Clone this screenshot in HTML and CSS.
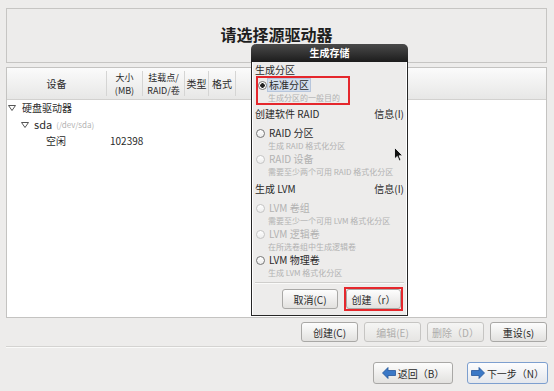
FILE: index.html
```html
<!DOCTYPE html>
<html lang="zh-CN">
<head>
  <meta charset="UTF-8">
  <title>请选择源驱动器</title>
  <link rel="stylesheet" href="styles.css">
</head>
<body>
  <div class="screen">
    <div class="title-box">
      <h1>请选择源驱动器</h1>
    </div>

    <div class="tree">
      <div class="tree-head">
        <div class="col c-dev">设备</div>
        <div class="col c-size two-line">大小<br>(MB)</div>
        <div class="col c-mount two-line">挂载点/<br>RAID/卷</div>
        <div class="col c-type">类型</div>
        <div class="col c-fmt">格式</div>
      </div>
      <div class="tree-body">
        <div class="row lvl0">
          <svg class="expander" width="8" height="6" viewBox="0 0 8 6"><path d="M0.5 0.5 H7.5 L4 5.5 Z" fill="none" stroke="#555" stroke-width="1"/></svg>
          <span>硬盘驱动器</span>
        </div>
        <div class="row lvl1">
          <svg class="expander" width="8" height="6" viewBox="0 0 8 6"><path d="M0.5 0.5 H7.5 L4 5.5 Z" fill="none" stroke="#555" stroke-width="1"/></svg>
          <span class="dev">sda</span>
          <span class="dev-path">(/dev/sda)</span>
        </div>
        <div class="row lvl2">
          <span class="free-name">空闲</span>
          <span class="free-size">102398</span>
        </div>
      </div>
    </div>

    <div class="actions">
      <button class="btn">创建(C)</button>
      <button class="btn" disabled>编辑(E)</button>
      <button class="btn" disabled>删除（D）</button>
      <button class="btn">重设(s)</button>
    </div>

    <div class="sep"></div>

    <div class="nav">
      <button class="btn btn-nav">
        <svg width="14" height="12" viewBox="0 0 14 12"><path d="M0.5 6 L6 0.5 V3.5 H13.5 V8.5 H6 V11.5 Z" fill="#3a78c6" stroke="#24569a" stroke-width="0.8"/></svg>
        <span>返回（B）</span>
      </button>
      <button class="btn btn-nav btn-focus">
        <svg width="14" height="12" viewBox="0 0 14 12"><path d="M13.5 6 L8 0.5 V3.5 H0.5 V8.5 H8 V11.5 Z" fill="#3a78c6" stroke="#24569a" stroke-width="0.8"/></svg>
        <span>下一步（N）</span>
      </button>
    </div>
  </div>

  <div class="dialog">
    <div class="dialog-title">生成存储</div>
    <div class="dialog-body">
      <div class="group-label">生成分区</div>
      <div class="red-box">
        <div class="opt">
          <span class="radio checked"></span>
          <span class="opt-selected">标准分区</span>
        </div>
        <div class="hint hint-tight">生成分区的一般目的</div>
      </div>

      <div class="section-head">
        <span>创建软件 RAID</span>
        <span>信息(I)</span>
      </div>
      <div class="opt-list">
        <div class="opt"><span class="radio"></span><span>RAID 分区</span></div>
        <div class="hint">生成 RAID 格式化分区</div>
        <div class="opt disabled"><span class="radio"></span><span>RAID 设备</span></div>
        <div class="hint">需要至少两个可用 RAID 格式化分区</div>
      </div>

      <div class="section-head">
        <span>生成 LVM</span>
        <span>信息(I)</span>
      </div>
      <div class="opt-list">
        <div class="opt disabled"><span class="radio"></span><span>LVM 卷组</span></div>
        <div class="hint">需要至少一个可用 LVM 格式化分区</div>
        <div class="opt disabled"><span class="radio"></span><span>LVM 逻辑卷</span></div>
        <div class="hint">在所选卷组中生成逻辑卷</div>
        <div class="opt"><span class="radio"></span><span>LVM 物理卷</span></div>
        <div class="hint">生成 LVM 格式化分区</div>
      </div>

      <div class="dialog-sep"></div>

      <div class="dialog-buttons">
        <button class="btn btn-dlg">取消(C)</button>
        <div class="red-frame">
          <button class="btn btn-dlg">创建（r）</button>
        </div>
      </div>
    </div>
  </div>

  <svg class="cursor" width="10" height="15" viewBox="0 0 10 15">
    <path d="M0.5 0.5 V12 L3.3 9.4 L5.3 14 L7 13.2 L5.1 8.8 H8.8 Z" fill="#111" stroke="#fff" stroke-width="0.8"/>
  </svg>
</body>
</html>
```

FILE: styles.css
```css
/* Base */
* {
  box-sizing: border-box;
  margin: 0;
  padding: 0;
}

:root {
  --bg: #edeceb;
  --text: #2a2a2a;
  --muted: #b2b2b2;
  --line: #c6c5c3;
  --font: "Noto Sans CJK SC", "DejaVu Sans", sans-serif;
}

body {
  width: 554px;
  height: 391px;
  overflow: hidden;
  background-color: var(--bg);
  color: var(--text);
  font-family: var(--font);
  font-size: 10px;
  line-height: 1.2;
  position: relative;
}

/* Main screen */
.screen {
  padding: 8px 7px 0 6px;
}

.title-box {
  height: 55px;
  border: 1px solid var(--line);
  display: flex;
  align-items: center;
  justify-content: center;
}

.title-box h1 {
  font-size: 16px;
  font-weight: 700;
  color: #1e1e1e;
  margin-top: -1px;
}

/* Device tree */
.tree {
  margin-top: 4px;
  height: 251px;
  background-color: #fff;
  border: 1px solid #c4c3c1;
}

.tree-head {
  height: 32px;
  display: flex;
  background: linear-gradient(#fbfbfb, #e7e7e6);
  border-bottom: 1px solid #d2d1cf;
}

.col {
  display: flex;
  align-items: center;
  justify-content: center;
  text-align: center;
  line-height: 12px;
  border-right: 1px solid #d5d5d4;
  margin: 3px 0;
}

.two-line {
  font-size: 9px;
  line-height: 13px;
}

.c-dev { width: 100px; }
.c-size { width: 36px; }
.c-mount { width: 42px; }
.c-type { width: 24px; }
.c-fmt { width: 27px; }

.row {
  height: 16.5px;
  display: flex;
  align-items: center;
}

.expander {
  flex: none;
}

.lvl0 {
  padding-left: 1px;
}

.lvl0 .expander {
  margin-right: 6px;
}

.lvl1 {
  padding-left: 14px;
}

.lvl1 .expander {
  margin-right: 5px;
}

.dev {
  font-size: 11px;
}

.dev-path {
  font-size: 8px;
  color: var(--muted);
  margin-left: 4px;
}

.free-name {
  margin-left: 39px;
  width: 64px;
}

/* Buttons */
.btn {
  font-family: var(--font);
  font-size: 10px;
  color: var(--text);
  background: linear-gradient(#fdfdfd, #e2e1df);
  border: 1px solid #a9a8a6;
  border-radius: 3px;
  display: inline-flex;
  align-items: center;
  justify-content: center;
}

.btn:disabled {
  color: #aeadab;
  border-color: #c6c5c3;
  background: linear-gradient(#f5f5f4, #e6e5e3);
}

.actions {
  margin-top: 4px;
  display: flex;
  justify-content: flex-end;
  gap: 6px;
}

.actions .btn {
  width: 57px;
  height: 20px;
}

.sep {
  margin-top: 4px;
  border-top: 1px solid #d4d3d1;
  border-bottom: 1px solid #fafaf9;
}

.nav {
  margin-top: 14px;
  margin-right: -1px;
  display: flex;
  justify-content: flex-end;
  gap: 14px;
}

.btn-nav {
  width: 80px;
  height: 22px;
  gap: 2px;
}

.btn-nav + .btn-nav {
  width: 81px;
}

.btn-focus {
  border-color: #7d9fcf;
  background: linear-gradient(#fdfdfe, #e4e7ec);
}

/* Dialog */
.dialog {
  position: absolute;
  left: 251px;
  top: 44px;
  width: 157px;
}

.dialog-title {
  height: 18px;
  border-radius: 5px 5px 0 0;
  background: linear-gradient(#4a4a4a, #1c1c1c);
  color: #fff;
  font-weight: 700;
  text-align: center;
  line-height: 18px;
}

.dialog-body {
  height: 254px;
  background-color: var(--bg);
  border: 1px solid #262626;
  border-top: none;
  box-shadow: inset 1px 0 #fff, inset -1px 0 #fff;
  padding: 2px 3px 0 3px;
}

.group-label {
  line-height: 12px;
}

.red-box {
  width: 94px;
  height: 29px;
  margin-left: 1px;
  border: 2px solid #e5272c;
}

.opt {
  height: 14px;
  display: flex;
  align-items: center;
}

.radio {
  width: 9px;
  height: 9px;
  flex: none;
  margin-left: 1px;
  margin-right: 4px;
  border: 1px solid #777;
  border-radius: 50%;
  background: linear-gradient(#fff, #ececec);
}

.radio.checked {
  margin-left: 0;
  margin-right: 0;
  background: radial-gradient(circle, #222 0 2px, #fff 2.5px);
}

.opt-selected {
  padding: 0 1px;
  margin-left: 0;
  background-color: #d4deec;
  border: 1px solid #b7c6dc;
  line-height: 12px;
}

.opt.disabled {
  color: var(--muted);
}

.opt.disabled .radio {
  border-color: #c4c4c4;
}

.hint {
  height: 12px;
  line-height: 12px;
  padding-left: 13px;
  font-size: 8px;
  color: var(--muted);
  white-space: nowrap;
}

.hint-tight {
  height: 11px;
  line-height: 11px;
  padding-left: 10px;
}

.section-head {
  margin-top: 2px;
  height: 14px;
  line-height: 14px;
  display: flex;
  justify-content: space-between;
}

.opt-list {
  margin-top: 5px;
}

.opt-list + .section-head {
  margin-top: 4px;
}

.dialog-sep {
  margin-top: 3px;
  border-top: 1px solid #cfcecc;
  border-bottom: 1px solid #fafaf9;
}

.dialog-buttons {
  margin-top: 3px;
  margin-right: 1px;
  display: flex;
  justify-content: flex-end;
  align-items: center;
  gap: 6px;
}

.btn-dlg {
  width: 56px;
  height: 20px;
}

.red-frame {
  border: 2px solid #e5272c;
  padding: 0;
  display: flex;
}

.red-frame .btn-dlg {
  width: 55px;
}

/* Mouse pointer */
.cursor {
  position: absolute;
  left: 394px;
  top: 147px;
}
```
